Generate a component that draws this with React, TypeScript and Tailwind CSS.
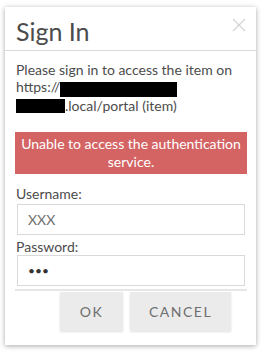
import React from "react";

export default function App() {
  return (
    <div className="w-[263px] h-[353px] bg-white pt-[7px] pl-[5px]" style={{ fontFamily: "Lato, 'Open Sans', sans-serif" }}>
      <div className="w-[251px] h-[338px] bg-white shadow-[0_1px_5px_rgba(0,0,0,0.35)] flex flex-col">
        <div className="h-[44px] border-b border-[#d9d9d9] flex items-start justify-between pl-[11px] pr-[10px]">
          <div className="text-[25px] leading-[25px] mt-[12px] text-[#4c4c4c]">Sign In</div>
          <svg width="14" height="14" viewBox="0 0 14 14" className="mt-[11px]">
            <path d="M1 1 L13 13 M13 1 L1 13" stroke="#d4d4d4" strokeWidth="1.2" />
          </svg>
        </div>
        <div className="pl-[10px] pr-[9px] pt-[10px] flex flex-col">
          <div className="pl-[1px] text-[14px] leading-[17px] text-[#4c4c4c]">
            <div>Please sign in to access the item on</div>
            <div>
              https://<span className="inline-block align-top mt-[4px] w-[117px] h-[15px] bg-black"></span>
            </div>
            <div>
              <span className="inline-block align-top mt-[2px] w-[49px] h-[14px] bg-black"></span>.local/portal (item)
            </div>
          </div>
          <div className="mt-[18px] h-[42px] bg-[#d46464] text-white text-[14px] leading-[18px] text-center flex items-center justify-center px-1">
            Unable to access the authentication service.
          </div>
          <div className="mt-[11px] text-[14px] leading-[17px] text-[#4c4c4c] pl-[1px]">Username:</div>
          <div className="mt-[2px] ml-[2px] mr-[2px] h-[31px] border border-[#d9d9d9] flex items-center pl-[10px] text-[14px] text-[#6e6e6e]">
            XXX
          </div>
          <div className="mt-[3px] text-[14px] leading-[17px] text-[#4c4c4c] pl-[1px]">Password:</div>
          <div className="ml-[2px] mr-[2px] h-[31px] border border-[#d9d9d9] flex items-center pl-[10px] text-[12px] text-[#333] tracking-[0px]">
            •••
          </div>
          <div className="mt-[3px] border-t-2 border-[#e6e6e6] pt-[1px] flex justify-end gap-[7px] pr-[16px]">
            <button className="w-[63px] h-[39px] bg-[#ebebeb] shadow-[0_1px_2px_rgba(0,0,0,0.12)] text-[14px] tracking-[1.5px] text-[#6e6e6e]">OK</button>
            <button className="w-[101px] h-[39px] bg-[#ebebeb] shadow-[0_1px_2px_rgba(0,0,0,0.12)] text-[14px] tracking-[1.5px] text-[#6e6e6e]">CANCEL</button>
          </div>
        </div>
      </div>
    </div>
  );
}
